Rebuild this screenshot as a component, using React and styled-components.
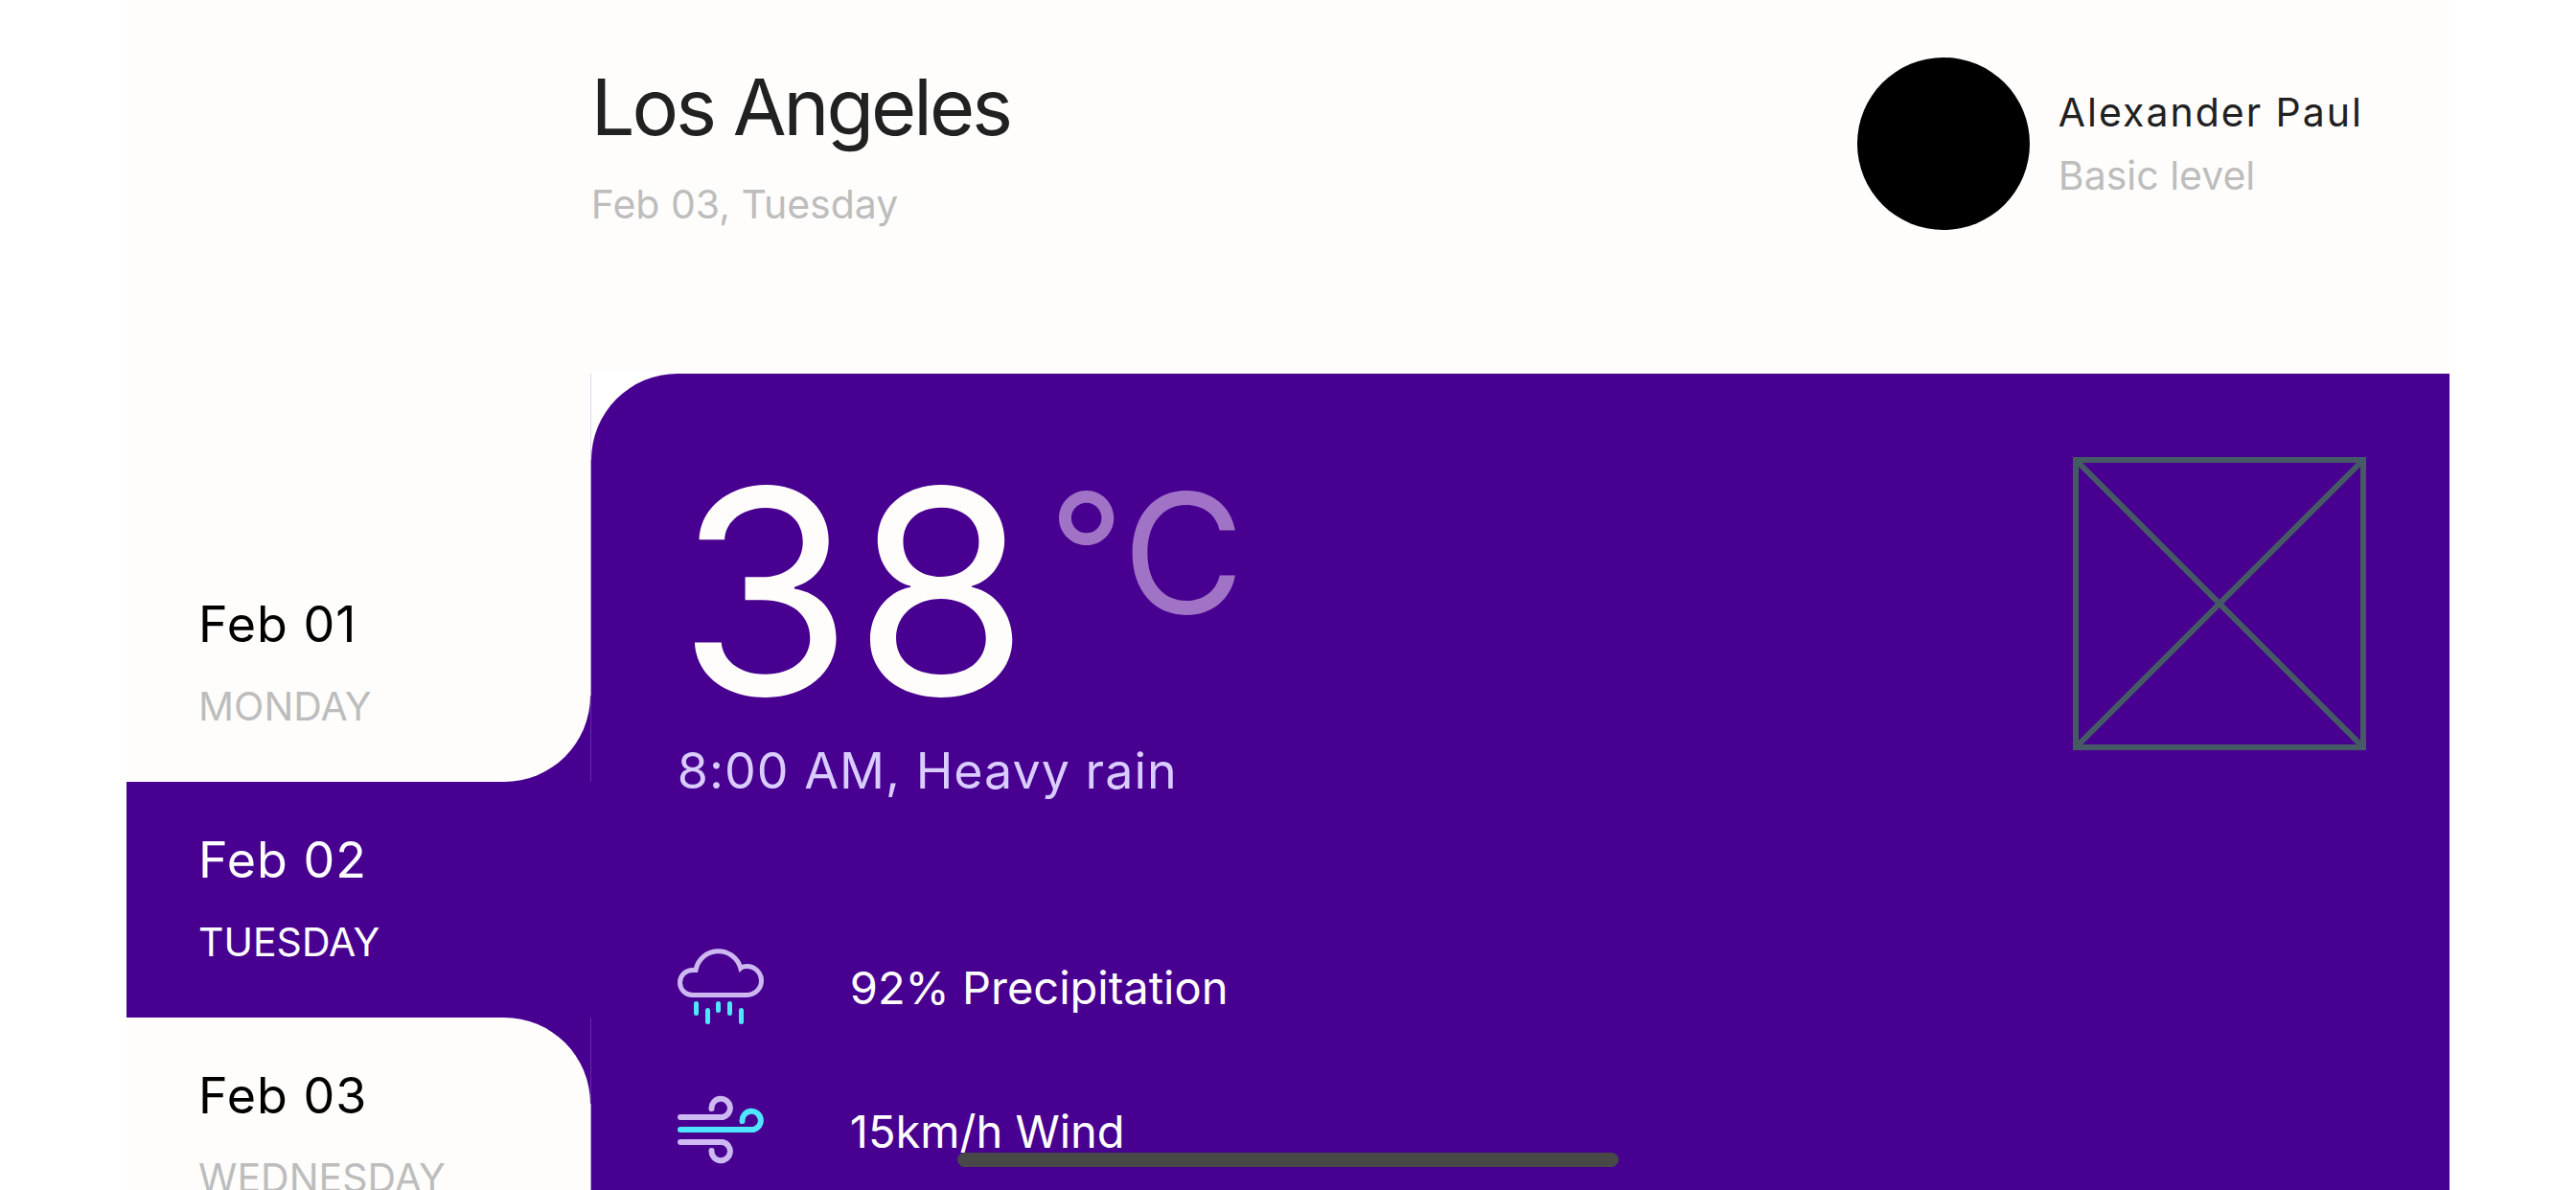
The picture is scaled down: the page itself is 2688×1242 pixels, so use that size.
import React from "react";
import styled, { createGlobalStyle } from "styled-components";

const color = {
  paper: "#fffdfc",
  violet: "#470090",
  ink: "#212121",
  muted: "#bdbdbd",
  lilac: "#d9ccff",
  unit: "#a073c6",
  cloud: "#cdb8f2",
  cyan: "#50e6ff",
  placeholder: "#455a64",
};

const GlobalStyle = createGlobalStyle`
  * { box-sizing: border-box; }
  html, body { margin: 0; background: #fff; }
  body {
    height: 100vh;
    overflow: hidden;
    font-family: Inter, "Liberation Sans", sans-serif;
    font-weight: 400;
  }
  h1, p { margin: 0; font-weight: 400; }
`;

const Screen = styled.div`
  height: 100vh;
  padding: 0 132px;
  overflow: hidden;
`;

const SafeArea = styled.div`
  display: grid;
  grid-template-columns: minmax(0, 1fr) minmax(0, 4fr);
  grid-template-rows: 390px auto;
  background: ${color.paper};
`;

const Header = styled.header`
  grid-column: 2;
  display: flex;
  justify-content: space-between;
  align-items: flex-start;
  padding: 60px 90px 0 0;
`;

const Place = styled.div`
  display: flex;
  flex-direction: column;
  gap: 24px;
`;

const City = styled.h1`
  font-size: 81px;
  line-height: 104px;
  letter-spacing: -3px;
  color: ${color.ink};
`;

const Caption = styled.p`
  font-size: 41px;
  line-height: 50px;
  letter-spacing: ${(p) => p.$tracking || 0}px;
  color: ${(p) => (p.$strong ? color.ink : color.muted)};
`;

const Profile = styled.div`
  display: flex;
  align-items: center;
  gap: 30px;
`;

const Avatar = styled.div`
  width: 180px;
  height: 180px;
  border-radius: 50%;
  background: #000;
`;

const ProfileText = styled.div`
  display: flex;
  flex-direction: column;
  gap: 16px;
`;

/* The right-most pixel column is the seam between the days and the panel. */
const Days = styled.nav`
  display: flex;
  flex-direction: column;
  padding-right: 1px;
  background:
    linear-gradient(
      #e0d4f0 0 90px,
      #b59dd6 90px 336px,
      #6429a6 336px 426px,
      ${color.violet} 426px 672px,
      #6429a6 672px 762px,
      #b59dd6 762px
    ) right top / 1px 100% no-repeat,
    ${color.violet};
`;

const Day = styled.button`
  display: flex;
  flex-direction: column;
  gap: 28px;
  align-items: flex-start;
  width: 100%;
  padding: ${(p) => (p.$first ? 230 : 50)}px 75px 54px;
  border: 0;
  font: inherit;
  text-align: left;
  color: ${(p) => (p.$active ? "#fff" : "#000")};
  background: ${(p) => (p.$active ? color.violet : color.paper)};
  border-radius: ${(p) => p.$corners || 0};
`;

const DayDate = styled.span`
  font-size: 52px;
  line-height: 64px;
  letter-spacing: 1px;
`;

const DayName = styled.span`
  font-size: 41px;
  line-height: 50px;
  color: ${(p) => (p.$active ? "#fff" : color.muted)};
`;

const PanelBacking = styled.main`
  background: #fff;
`;

const Panel = styled.section`
  display: flex;
  justify-content: space-between;
  align-items: flex-start;
  height: 100%;
  padding: 87px 87px 0 90px;
  background: ${color.violet};
  border-top-left-radius: 90px;
`;

const Reading = styled.div`
  display: flex;
  flex-direction: column;
`;

const Temperature = styled.div`
  display: flex;
  align-items: flex-start;
  gap: 20px;
  color: ${color.paper};
`;

const Degrees = styled.span`
  font-size: 297px;
  line-height: 280px;
`;

const Unit = styled.span`
  font-size: 174px;
  line-height: 200px;
  color: ${color.unit};
`;

const Condition = styled.p`
  margin-top: 16px;
  font-size: 52px;
  line-height: 64px;
  letter-spacing: 1px;
  color: ${color.lilac};
`;

const Metrics = styled.ul`
  display: flex;
  flex-direction: column;
  gap: 60px;
  margin: 148px 0 0;
  padding: 0;
  list-style: none;
`;

const Metric = styled.li`
  display: flex;
  align-items: center;
  gap: 90px;
  height: 90px;
  font-size: 47px;
  color: #fff;
`;

const Icon = styled.svg`
  width: 90px;
  height: 90px;
  fill: none;
  stroke-linecap: round;
`;

const Placeholder = styled.svg`
  width: 306px;
  height: 306px;
  fill: none;
  stroke: ${color.placeholder};
  stroke-width: 6;
`;

/* System gesture bar floating over the page. */
const HomeIndicator = styled.div`
  position: fixed;
  left: 50%;
  bottom: 24px;
  width: 690px;
  height: 15px;
  margin-left: -345px;
  border-radius: 8px;
  background: #484848;
`;

function RainIcon() {
  return (
    <Icon viewBox="0 0 90 90" strokeWidth="5" aria-hidden="true">
      <path
        stroke={color.cloud}
        d="M15.500 53.500H72.500A15 15 0 0 0 72.500 23.500Q68 23.500 65.800 25.500A24 24 0 0 0 19 27.500H15.500A13 13 0 0 0 15.500 53.500Z"
      />
      <path
        stroke={color.cyan}
        d="M19.500 62.500V72.500M31.500 69.500V81.500M42.500 62.500V69.500M54.500 62.500V72.500M66.500 69.500V81.500"
      />
    </Icon>
  );
}

function WindIcon() {
  return (
    <Icon viewBox="0 0 90 90" strokeWidth="6" aria-hidden="true">
      <path stroke={color.cloud} d="M3 31H47A9.700 9.700 0 1 0 35.500 22" />
      <path stroke={color.cyan} d="M3 44H79A9.700 9.700 0 1 0 67.500 35" />
      <path stroke={color.cloud} d="M3 57H47A9.700 9.700 0 1 1 35.500 66" />
    </Icon>
  );
}

const days = [
  { date: "Feb 01", name: "MONDAY", first: true, corners: "0 0 90px 0" },
  { date: "Feb 02", name: "TUESDAY", active: true },
  { date: "Feb 03", name: "WEDNESDAY", corners: "0 90px 0 0" },
];

export default function App() {
  return (
    <Screen>
      <GlobalStyle />
      <SafeArea>
        <Header>
          <Place>
            <City>Los Angeles</City>
            <Caption>Feb 03, Tuesday</Caption>
          </Place>
          <Profile>
            <Avatar />
            <ProfileText>
              <Caption $strong $tracking={2}>Alexander Paul</Caption>
              <Caption>Basic level</Caption>
            </ProfileText>
          </Profile>
        </Header>
        <Days>
          {days.map((d) => (
            <Day
              key={d.date}
              type="button"
              $first={d.first}
              $active={d.active}
              $corners={d.corners}
            >
              <DayDate>{d.date}</DayDate>
              <DayName $active={d.active}>{d.name}</DayName>
            </Day>
          ))}
        </Days>
        <PanelBacking>
          <Panel>
            <Reading>
              <Temperature>
                <Degrees>38</Degrees>
                <Unit>°C</Unit>
              </Temperature>
              <Condition>8:00 AM, Heavy rain</Condition>
              <Metrics>
                <Metric>
                  <RainIcon />
                  92% Precipitation
                </Metric>
                <Metric>
                  <WindIcon />
                  15km/h Wind
                </Metric>
              </Metrics>
            </Reading>
            <Placeholder viewBox="0 0 306 306" aria-hidden="true">
              <path d="M3 3H303V303H3ZM3 3L303 303M303 3L3 303" />
            </Placeholder>
          </Panel>
        </PanelBacking>
      </SafeArea>
      <HomeIndicator />
    </Screen>
  );
}
